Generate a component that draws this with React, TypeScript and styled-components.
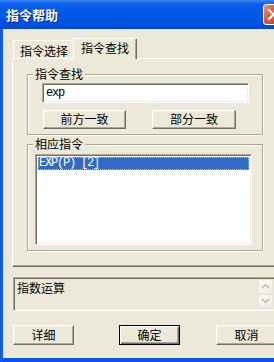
import React from "react";
import styled, { createGlobalStyle } from "styled-components";

const FACE = "#ECE9D8";
const SHADOW = "#ACA899";
const DARK = "#716F64";
const LIGHT = "#F1EFE2";

const GlobalStyle = createGlobalStyle`
  html, body {
    margin: 0;
    padding: 0;
    width: 274px;
    height: 362px;
    overflow: hidden;
    background: ${FACE};
  }
  body {
    font-family: "Noto Sans CJK SC", "Liberation Sans", sans-serif;
    font-size: 12px;
    line-height: 14px;
    color: #000;
  }
`;

const App = () => {
  return (
    <>
      <GlobalStyle />
      <Window>
        <TitleBar>
          <Title>指令帮助</Title>
          <CloseButton>
            <svg width="21" height="21" viewBox="0 0 21 21">
              <path d="M6 6 L15 15 M15 6 L6 15" stroke="#fff" strokeWidth="2.2" strokeLinecap="square" />
            </svg>
          </CloseButton>
        </TitleBar>
        <Client>
          <TabStrip>
            <Tab>指令选择</Tab>
            <Tab $active>指令查找</Tab>
          </TabStrip>
          <TabPanel>
            <Group>
              <Legend $offset={-9}>指令查找</Legend>
              <TextBox>exp</TextBox>
              <GroupButtons>
                <PushButton $w={83} $h={19}>前方一致</PushButton>
                <PushButton $w={84} $h={19}>部分一致</PushButton>
              </GroupButtons>
            </Group>
            <Group $gap={2} $pad="3px 10px 5px 7px">
              <Legend $offset={-2}>相应指令</Legend>
              <ListBox>
                <ListRow $selected>EXP(P) [2]</ListRow>
              </ListBox>
            </Group>
          </TabPanel>
          <Description>
            <DescText>指数运算</DescText>
            <ScrollBar>
              <ScrollButton>
                <svg width="9" height="6" viewBox="0 0 9 6">
                  <path d="M1 5 L4.5 1.5 L8 5" fill="none" stroke="#C9C7BA" strokeWidth="1.8" />
                </svg>
              </ScrollButton>
              <ScrollButton>
                <svg width="9" height="6" viewBox="0 0 9 6">
                  <path d="M1 1 L4.5 4.5 L8 1" fill="none" stroke="#C9C7BA" strokeWidth="1.8" />
                </svg>
              </ScrollButton>
            </ScrollBar>
          </Description>
          <ButtonRow>
            <PushButton $w={61} $h={20}>详细</PushButton>
            <PushButton $w={61} $h={20} $default>确定</PushButton>
            <PushButton $w={61} $h={20}>取消</PushButton>
          </ButtonRow>
        </Client>
      </Window>
    </>
  );
};

export default App;

const Window = styled.div`
  width: 289px;
  height: 362px;
  display: flex;
  flex-direction: column;
  background: linear-gradient(to right, #0842C8 0, #166BF5 1px, #0A55E6 3px, #0A55E6 100%);
`;

const TitleBar = styled.div`
  height: 29px;
  flex: none;
  display: flex;
  align-items: center;
  justify-content: space-between;
  padding: 0 5px 0 6px;
  box-sizing: border-box;
  background: linear-gradient(
    to bottom,
    #3F8CF3 0,
    #1F6FF0 2px,
    #0A5DEB 5px,
    #0058E8 14px,
    #0053E2 24px,
    #0046CE 29px
  );
`;

const Title = styled.span`
  color: #fff;
  font-weight: 700;
  font-size: 13px;
  line-height: 16px;
  margin-top: 1px;
  text-shadow: 1px 1px 0 #0A1E8C;
`;

const CloseButton = styled.div`
  width: 21px;
  height: 21px;
  box-sizing: border-box;
  border: 1px solid #fff;
  border-radius: 3px;
  background: linear-gradient(to bottom right, #ED8E6A 0%, #DC5B34 45%, #C63E19 100%);
  display: flex;
  align-items: center;
  justify-content: center;

  svg {
    margin: -1px;
  }
`;

const Client = styled.div`
  flex: 1;
  margin: 0 3px 4px 3px;
  padding: 9px 10px 0 10px;
  background: ${FACE};
  display: flex;
  flex-direction: column;
`;

const TabStrip = styled.div`
  height: 20px;
  display: flex;
  align-items: flex-end;
  padding-left: 1px;
  margin-left: -1px;
`;

const Tab = styled.div<{ $active?: boolean }>`
  position: relative;
  box-sizing: border-box;
  width: ${({ $active }) => ($active ? 64 : 62)}px;
  height: ${({ $active }) => ($active ? 21 : 18)}px;
  margin-left: ${({ $active }) => ($active ? -2 : 0)}px;
  margin-bottom: ${({ $active }) => ($active ? -1 : 0)}px;
  z-index: ${({ $active }) => ($active ? 1 : 0)};
  background: ${FACE};
  border-top: 1px solid #fff;
  border-left: 1px solid #fff;
  border-right: 1px solid ${DARK};
  box-shadow: inset -1px 0 0 ${SHADOW};
  border-top-left-radius: 2px;
  border-top-right-radius: 2px;
  text-align: center;
  padding-top: ${({ $active }) => ($active ? 2 : 3)}px;
  white-space: nowrap;
`;

const TabPanel = styled.div`
  box-sizing: border-box;
  margin-left: -1px;
  border-top: 1px solid #fff;
  border-left: 1px solid #fff;
  border-right: 1px solid ${DARK};
  border-bottom: 1px solid ${DARK};
  box-shadow: inset -1px -1px 0 ${SHADOW};
  padding: 8px 12px 15px 14px;
  display: flex;
  flex-direction: column;
`;

const Group = styled.fieldset<{ $gap?: number; $pad?: string }>`
  margin: ${({ $gap }) => $gap ?? 0}px 0 0 0;
  padding: ${({ $pad }) => $pad ?? "2px 13px 5px 14px"};
  min-width: 0;
  border: 1px solid ${SHADOW};
  box-shadow: inset 1px 1px 0 #fff, 1px 1px 0 #fff;
  display: flex;
  flex-direction: column;
`;

const Legend = styled.legend<{ $offset: number }>`
  margin-left: ${({ $offset }) => $offset}px;
  padding: 0 2px;
  line-height: 14px;
  background: ${FACE};
`;

const sunken = `
  box-sizing: border-box;
  border-style: solid;
  border-width: 1px;
  border-color: ${SHADOW} #fff #fff ${SHADOW};
  box-shadow: inset 1px 1px 0 ${DARK}, inset -1px -1px 0 ${LIGHT};
`;

const monoText = `
  font-family: "Liberation Mono", "DejaVu Sans Mono", monospace;
  font-size: 12px;
  letter-spacing: -1.2px;
`;

const TextBox = styled.div`
  ${sunken}
  ${monoText}
  height: 20px;
  background: #fff;
  padding: 2px 0 0 3px;
  line-height: 15px;
`;

const GroupButtons = styled.div`
  display: flex;
  gap: 26px;
  margin-top: 7px;
  padding-left: 1px;
`;

const PushButton = styled.div<{ $w: number; $h: number; $default?: boolean }>`
  box-sizing: border-box;
  width: ${({ $w }) => $w}px;
  height: ${({ $h }) => $h}px;
  background: ${FACE};
  border: 1px solid;
  border-color: ${({ $default }) => ($default ? "#000" : `#fff ${DARK} ${DARK} #fff`)};
  box-shadow: ${({ $default }) =>
    $default
      ? `inset 1px 1px 0 #fff, inset -1px -1px 0 ${DARK}, inset -2px -2px 0 ${SHADOW}`
      : `inset -1px -1px 0 ${SHADOW}, inset 1px 1px 0 ${LIGHT}`};
  display: flex;
  align-items: center;
  justify-content: center;
  padding-bottom: 1px;
  white-space: nowrap;
`;

const ListBox = styled.div`
  ${sunken}
  height: 91px;
  background: #fff;
  padding: 2px;
`;

const ListRow = styled.div<{ $selected?: boolean }>`
  ${monoText}
  height: 13px;
  box-sizing: border-box;
  padding-left: 1px;
  background: ${({ $selected }) => ($selected ? "#316AC5" : "transparent")};
  color: ${({ $selected }) => ($selected ? "#fff" : "#000")};
  outline: ${({ $selected }) => ($selected ? "1px dotted #A9BFE6" : "none")};
  outline-offset: -1px;
  line-height: 13px;
`;

const Description = styled.div`
  ${sunken}
  margin-top: 10px;
  height: 34px;
  background: ${FACE};
  padding: 2px 2px 2px 3px;
  display: flex;
  justify-content: space-between;
`;

const DescText = styled.div`
  padding-top: 1px;
`;

const ScrollBar = styled.div`
  width: 15px;
  display: flex;
  flex-direction: column;
  margin-top: -1px;
`;

const ScrollButton = styled.div`
  box-sizing: border-box;
  width: 15px;
  height: 15px;
  border: 1px solid #E8E6DC;
  border-radius: 2px;
  background: linear-gradient(to bottom right, #FAFAF6, #EEEDE5);
  display: flex;
  align-items: center;
  justify-content: center;
`;

const ButtonRow = styled.div`
  margin-top: 14px;
  display: grid;
  grid-template-columns: 106px 97px 61px;
`;
